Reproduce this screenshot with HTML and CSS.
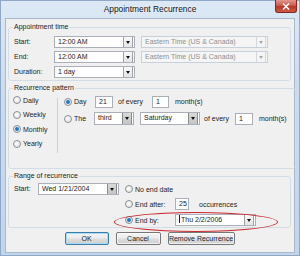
FILE: index.html
```html
<!DOCTYPE html>
<html lang="en">

<head>
    <meta charset="UTF-8">
    <meta name="viewport" content="width=device-width, initial-scale=1.0">
    <title>Appointment Recurrence</title>
    <link rel="stylesheet" href="styles.css">
</head>

<body>

    <div class="window">
        <div class="titlebar">
            <span class="title">Appointment Recurrence</span>
            <span class="close">
                <svg width="8" height="7" viewBox="0 0 8 7">
                    <path d="M1 0.5 L7 6.5 M7 0.5 L1 6.5" stroke="#fff" stroke-width="1.6" />
                </svg>
            </span>
        </div>

        <div class="client">
            <!-- appointment time -->
            <fieldset class="group">
                <legend>Appointment time</legend>
                <div class="time-grid">
                    <span class="lbl">Start:</span>
                    <div class="combo"><span class="val">12:00 AM</span><span class="arrow"></span></div>
                    <div class="combo disabled"><span class="val">Eastern Time (US &amp; Canada)</span><span class="arrow"></span></div>

                    <span class="lbl">End:</span>
                    <div class="combo"><span class="val">12:00 AM</span><span class="arrow"></span></div>
                    <div class="combo disabled"><span class="val">Eastern Time (US &amp; Canada)</span><span class="arrow"></span></div>

                    <span class="lbl">Duration:</span>
                    <div class="combo"><span class="val">1 day</span><span class="arrow"></span></div>
                </div>
            </fieldset>

            <!-- recurrence pattern -->
            <fieldset class="group pattern">
                <legend>Recurrence pattern</legend>
                <div class="pattern-body">
                    <div class="kinds">
                        <div class="opt"><span class="radio"></span>Daily</div>
                        <div class="opt"><span class="radio"></span>Weekly</div>
                        <div class="opt"><span class="radio on"></span>Monthly</div>
                        <div class="opt"><span class="radio"></span>Yearly</div>
                    </div>
                    <div class="sep"></div>
                    <div class="monthly">
                        <div class="mrow">
                            <span class="radio on"></span><span class="rtext">Day</span>
                            <span class="field w18">21</span>
                            <span class="txt every1">of every</span>
                            <span class="field w17">1</span>
                            <span class="txt">month(s)</span>
                        </div>
                        <div class="mrow">
                            <span class="radio"></span><span class="rtext the">The</span>
                            <div class="combo dark w40"><span class="val">third</span><span class="arrow"></span></div>
                            <div class="combo dark w60"><span class="val">Saturday</span><span class="arrow"></span></div>
                            <span class="txt every2">of every</span>
                            <span class="field w18">1</span>
                            <span class="txt">month(s)</span>
                        </div>
                    </div>
                </div>
            </fieldset>

            <!-- range of recurrence -->
            <fieldset class="group range">
                <legend>Range of recurrence</legend>
                <div class="range-grid">
                    <span class="lbl">Start:</span>
                    <div class="combo dark"><span class="val">Wed 1/21/2004</span><span class="arrow"></span></div>
                    <div class="ropt"><span class="radio"></span><span class="rtext">No end date</span></div>

                    <div class="ropt r2"><span class="radio"></span><span class="rtext w40">End after:</span><span class="field w14">25</span><span class="txt occ">occurrences</span></div>

                    <div class="ropt r3"><span class="radio on"></span><span class="rtext w40">End by:</span>
                        <div class="combo w81"><span class="val"><i class="caret"></i>Thu 2/2/2006</span><span class="arrow"></span></div>
                    </div>
                </div>
            </fieldset>

            <div class="buttons">
                <button class="btn default w44">OK</button>
                <button class="btn w45">Cancel</button>
                <button class="btn w66">Remove Recurrence</button>
            </div>

            <div class="mark"></div>
        </div>
    </div>

</body>

</html>
```

FILE: styles.css
```css
* {
    padding: 0;
    margin: 0;
    box-sizing: border-box;
}

body {
    font-family: "Liberation Sans", Arial, sans-serif;
    font-size: 7px;
    color: #1c1c1c;
    background: #fff;
}

.window {
    width: 300px;
    height: 256px;
    border: 1px solid #8ea8c6;
    background: linear-gradient(#dce8f5, #c9dbee 40%, #c2d5eb);
    display: flex;
    flex-direction: column;
}

.titlebar {
    height: 17px;
    display: grid;
    grid-template-columns: 1fr auto 1fr;
    align-items: start;
}

.title {
    grid-column: 2;
    font-size: 8.4px;
    line-height: 17px;
    color: #111;
    text-shadow: 0 0 3px #fff;
}

.close {
    grid-column: 3;
    justify-self: end;
    margin-top: -1px;
    margin-right: 2px;
    width: 22px;
    height: 13px;
    border: 1px solid #7d2a24;
    border-top: none;
    border-radius: 0 0 3px 3px;
    background: linear-gradient(#e6978c, #d2574a 45%, #bf3526 55%, #cf5a45);
    display: flex;
    justify-content: center;
    align-items: center;
}

.client {
    position: relative;
    margin: 0 4px;
    height: 235px;
    border: 1px solid #a6b9cf;
    background: #f0f0f0;
    padding: 3px 3px 0 2px;
}

.group {
    border: 1px solid #d3dde6;
    border-radius: 3px;
    padding: 0 4px 2px 4px;
}

.group legend {
    padding: 0 1px;
    line-height: 10px;
    color: #1c1c1c;
}

.lbl {
    padding-left: 1px;
    line-height: 12px;
}

/* combo boxes */
.combo {
    height: 12px;
    border: 1px solid #abb0b8;
    background: #fff;
    display: flex;
    align-items: stretch;
}

.combo .val {
    flex: 1;
    padding-left: 3px;
    line-height: 10px;
    white-space: nowrap;
    overflow: hidden;
}

.combo .arrow {
    width: 10px;
    margin: 0 1px 0 0;
    border: 1px solid #9ea3a8;
    border-top: none;
    border-bottom: none;
    background: linear-gradient(#fafafa, #e4e4e4);
    display: flex;
    justify-content: center;
    align-items: center;
}

.combo .arrow::after {
    content: "";
    border-left: 2.5px solid transparent;
    border-right: 2.5px solid transparent;
    border-top: 3px solid #111;
}

.combo.dark .arrow {
    background: linear-gradient(#d9d9d9, #c4c4c4);
    border-color: #8a8d90;
}

.combo.disabled {
    border-color: #c8d0da;
    background: #f5f5f5;
    color: #909090;
}

.combo.disabled .arrow {
    background: #f5f5f5;
    border-color: #d4d8dc;
}

.combo.disabled .arrow::after {
    border-top-color: #a8a8a8;
}

.field {
    height: 12px;
    border: 1px solid #abb0b8;
    background: #fff;
    padding-left: 3px;
    line-height: 10px;
}

.w14 { width: 14px; }
.w17 { width: 17px; }
.w18 { width: 18px; }
.w40 { width: 40px; }
.w44 { width: 44px; }
.w45 { width: 45px; }
.w60 { width: 60px; }
.w66 { width: 67px; }
.w81 { width: 81px; }

/* radios */
.radio {
    display: inline-block;
    flex: none;
    width: 8px;
    height: 8px;
    border-radius: 50%;
    border: 1px solid #8c8f93;
    background: radial-gradient(circle at 40% 40%, #ffffff, #dcdcdc);
}

.radio.on {
    background: radial-gradient(circle, #1f66b8 0, #3d86cf 1.6px, #e8eef5 2.4px, #d6dde4);
}

/* appointment time */
.time-grid {
    display: grid;
    grid-template-columns: 35px 81px 127px;
    grid-auto-rows: 12px;
    column-gap: 6px;
    row-gap: 3px;
    padding-top: 4px;
}

/* recurrence pattern */
.pattern {
    margin-top: 2px;
    padding-bottom: 15px;
}

.pattern-body {
    display: flex;
    align-items: flex-start;
}

.kinds {
    width: 44px;
}

.opt {
    height: 14.5px;
    display: flex;
    align-items: center;
    gap: 2px;
}

.sep {
    width: 1px;
    height: 55px;
    margin-top: 5px;
    background: #c9d2dc;
}

.monthly {
    padding: 2px 0 0 6px;
    display: flex;
    flex-direction: column;
    gap: 4px;
}

.mrow {
    height: 13px;
    display: flex;
    align-items: center;
}

.mrow .combo {
    height: 13px;
}

.rtext {
    margin-left: 2px;
    width: 21px;
}

.rtext.the {
    width: 20px;
}

.txt {
    margin-left: 6px;
    margin-right: 4px;
}

.every1 {
    margin-left: 5px;
    width: 29px;
    margin-right: 5px;
}

.mrow .w60 {
    margin-left: 6px;
}

.every2 {
    margin-left: 4px;
    width: 27px;
    margin-right: 4px;
}

/* range */
.range {
    margin-top: 2px;
}

.range-grid {
    display: grid;
    grid-template-columns: 25px 81px 1fr;
    grid-template-rows: 12px 12px 12px;
    row-gap: 3px;
    padding-top: 2px;
}

.ropt {
    margin-left: 6px;
    display: flex;
    align-items: center;
    white-space: nowrap;
}

.ropt .rtext {
    width: auto;
}

.ropt .rtext.w40 {
    width: 40px;
}

.ropt.r2 {
    grid-column: 3;
    grid-row: 2;
}

.ropt.r3 {
    grid-column: 3;
    grid-row: 3;
    margin-top: 2px;
}

.occ {
    margin-left: 10px;
}

.caret {
    display: inline-block;
    width: 1px;
    height: 8px;
    margin-right: 1px;
    vertical-align: -1px;
    background: #222;
}

/* buttons */
.buttons {
    margin-top: 4px;
    display: flex;
    justify-content: center;
    gap: 7px;
}

.btn {
    height: 13px;
    padding: 0;
    white-space: nowrap;
    font-family: inherit;
    font-size: 7px;
    line-height: 11px;
    color: #1c1c1c;
    border: 1px solid #777;
    border-radius: 2px;
    background: linear-gradient(#f4f4f4, #ececec 45%, #dcdcdc 55%, #cfcfcf);
    box-shadow: inset 0 0 0 1px rgba(255, 255, 255, 0.7);
}

.btn.default {
    border-color: #3d7bad;
    box-shadow: inset 0 0 0 1px #a6dcf6;
}

/* red ellipse drawn over the "End by" row */
.mark {
    position: absolute;
    left: 108px;
    top: 193px;
    width: 164px;
    height: 20px;
    border: 1.5px solid #c8262c;
    border-radius: 50%;
}
```
